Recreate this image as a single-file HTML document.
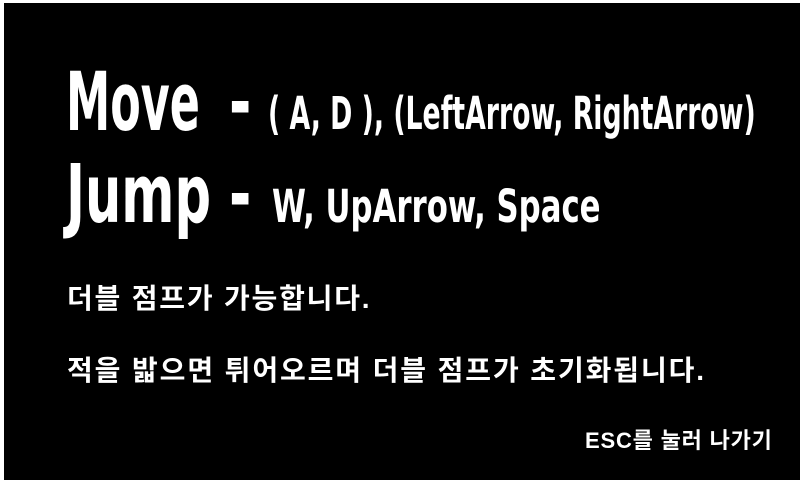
<!DOCTYPE html>
<html><head><meta charset="utf-8"><style>
html,body{margin:0;padding:0;background:#fff;}
body{width:800px;height:480px;position:relative;overflow:hidden;}
#bg{position:absolute;left:4px;top:3px;width:796px;height:477px;background:#000;}
.t{position:absolute;color:#fff;white-space:nowrap;transform-origin:0 0;line-height:1;}
.d{font-family:"DejaVu Sans Condensed","DejaVu Sans",sans-serif;font-weight:bold;}
.k{font-family:"Liberation Sans","Noto Sans CJK KR",sans-serif;font-weight:bold;}
</style></head><body>
<div id="bg"></div>
<div class="t d" style="left:66px;top:63px;font-size:81px;transform:scaleX(0.61)">Move</div>
<div class="t d" style="left:229px;top:63px;font-size:81px;transform:scaleX(0.74)">-</div>
<div class="t d" style="left:268px;top:91px;font-size:45px;transform:scaleX(0.66)">( A, D ), (LeftArrow, RightArrow)</div>
<div class="t d" style="left:66px;top:155px;font-size:81px;transform:scaleX(0.70)">Jump</div>
<div class="t d" style="left:229px;top:155px;font-size:81px;transform:scaleX(0.74)">-</div>
<div class="t d" style="left:272px;top:184px;font-size:45px;transform:scaleX(0.76)">W, UpArrow, Space</div>
<div class="t k" style="left:67px;top:285px;font-size:28px;letter-spacing:1.8px;">더블 점프가 가능합니다.</div>
<div class="t k" style="left:67px;top:357px;font-size:28px;letter-spacing:1.9px;">적을 밟으면 튀어오르며 더블 점프가 초기화됩니다.</div>
<div class="t k" style="left:585px;top:430px;font-size:22px;letter-spacing:0.8px;">ESC를 눌러 나가기</div>
</body></html>
